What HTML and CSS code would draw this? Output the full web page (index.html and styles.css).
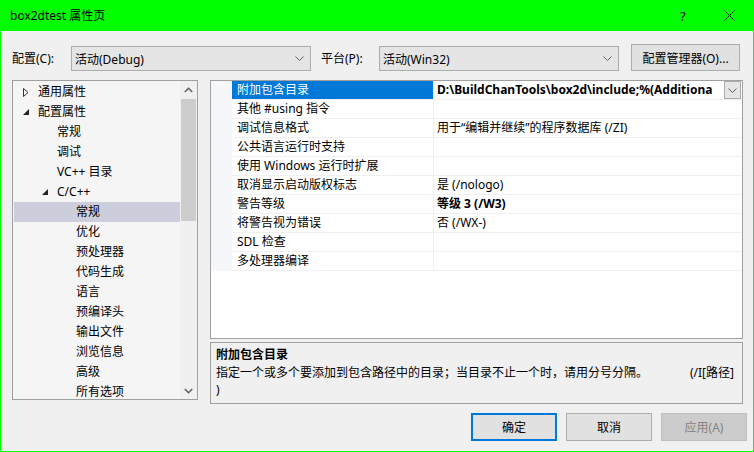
FILE: index.html
```html
<!DOCTYPE html>
<html lang="zh-CN">
<head>
  <meta charset="UTF-8" />
  <title>box2dtest 属性页</title>
  <link rel="stylesheet" href="styles.css">
</head>
<body>
  <div class="titlebar">
    <span class="title">box2dtest 属性页</span>
    <span class="help">?</span>
    <span class="close">
      <svg width="11" height="11" viewBox="0 0 11 11"><path d="M0.5 0.5 L10.5 10.5 M10.5 0.5 L0.5 10.5" stroke="#000" stroke-width="1" fill="none"/></svg>
    </span>
  </div>

  <div class="frame">
    <div class="config-row">
      <span class="cfg-label">配置(C):</span>
      <div class="combo">
        <span>活动(Debug)</span>
        <svg class="chev" width="9" height="5" viewBox="0 0 9 5"><path d="M0.5 0.5 L4.5 4.5 L8.5 0.5" stroke="#606060" fill="none"/></svg>
      </div>
      <span class="cfg-label platform">平台(P):</span>
      <div class="combo">
        <span>活动(Win32)</span>
        <svg class="chev" width="9" height="5" viewBox="0 0 9 5"><path d="M0.5 0.5 L4.5 4.5 L8.5 0.5" stroke="#606060" fill="none"/></svg>
      </div>
      <button class="btn mgr">配置管理器(O)...</button>
    </div>

    <div class="main">
      <div class="tree">
        <div class="tree-list">
          <div class="tree-row lvl0">
            <span class="toggle"><svg width="6" height="9" viewBox="0 0 6 9"><path d="M0.5 0.5 L5 4.5 L0.5 8.5 Z" stroke="#333" fill="none"/></svg></span>
            <span>通用属性</span>
          </div>
          <div class="tree-row lvl0">
            <span class="toggle"><svg width="6" height="6" viewBox="0 0 6 6"><path d="M6 0 L6 6 L0 6 Z" fill="#222"/></svg></span>
            <span>配置属性</span>
          </div>
          <div class="tree-row lvl1">常规</div>
          <div class="tree-row lvl1">调试</div>
          <div class="tree-row lvl1">VC++ 目录</div>
          <div class="tree-row lvl1t">
            <span class="toggle"><svg width="6" height="6" viewBox="0 0 6 6"><path d="M6 0 L6 6 L0 6 Z" fill="#222"/></svg></span>
            <span>C/C++</span>
          </div>
          <div class="tree-row lvl2 selected">常规</div>
          <div class="tree-row lvl2">优化</div>
          <div class="tree-row lvl2">预处理器</div>
          <div class="tree-row lvl2">代码生成</div>
          <div class="tree-row lvl2">语言</div>
          <div class="tree-row lvl2">预编译头</div>
          <div class="tree-row lvl2">输出文件</div>
          <div class="tree-row lvl2">浏览信息</div>
          <div class="tree-row lvl2">高级</div>
          <div class="tree-row lvl2">所有选项</div>
        </div>
        <div class="scrollbar">
          <div class="sb-arrow">
            <svg width="9" height="6" viewBox="0 0 9 6"><path d="M0.8 5 L4.5 1.3 L8.2 5" stroke="#606060" stroke-width="1.6" fill="none"/></svg>
          </div>
          <div class="sb-thumb"></div>
          <div class="sb-space"></div>
          <div class="sb-arrow">
            <svg width="9" height="6" viewBox="0 0 9 6"><path d="M0.8 1 L4.5 4.7 L8.2 1" stroke="#606060" stroke-width="1.6" fill="none"/></svg>
          </div>
        </div>
      </div>

      <div class="right">
        <div class="grid">
          <div class="prop selected">
            <div class="gutter"></div>
            <div class="pname">附加包含目录</div>
            <div class="pvalue bold">
              <span class="vtext">D:\BuildChanTools\box2d\include;%(Additiona</span>
              <span class="drop">
                <svg width="9" height="5" viewBox="0 0 9 5"><path d="M0.5 0.5 L4.5 4.5 L8.5 0.5" stroke="#606060" fill="none"/></svg>
              </span>
            </div>
          </div>
          <div class="prop"><div class="gutter"></div><div class="pname">其他 #using 指令</div><div class="pvalue"></div></div>
          <div class="prop"><div class="gutter"></div><div class="pname">调试信息格式</div><div class="pvalue">用于“编辑并继续”的程序数据库 (/ZI)</div></div>
          <div class="prop"><div class="gutter"></div><div class="pname">公共语言运行时支持</div><div class="pvalue"></div></div>
          <div class="prop"><div class="gutter"></div><div class="pname">使用 Windows 运行时扩展</div><div class="pvalue"></div></div>
          <div class="prop"><div class="gutter"></div><div class="pname">取消显示启动版权标志</div><div class="pvalue">是 (/nologo)</div></div>
          <div class="prop"><div class="gutter"></div><div class="pname">警告等级</div><div class="pvalue bold">等级 3 (/W3)</div></div>
          <div class="prop"><div class="gutter"></div><div class="pname">将警告视为错误</div><div class="pvalue">否 (/WX-)</div></div>
          <div class="prop"><div class="gutter"></div><div class="pname">SDL 检查</div><div class="pvalue"></div></div>
          <div class="prop"><div class="gutter"></div><div class="pname">多处理器编译</div><div class="pvalue"></div></div>
        </div>

        <div class="desc">
          <div class="desc-title">附加包含目录</div>
          <div class="desc-line">
            <span>指定一个或多个要添加到包含路径中的目录；当目录不止一个时，请用分号分隔。</span>
            <span>(/I[路径]</span>
          </div>
          <div class="desc-line">)</div>
        </div>
      </div>
    </div>

    <div class="buttons">
      <button class="btn default">确定</button>
      <button class="btn">取消</button>
      <button class="btn disabled">应用(A)</button>
    </div>
  </div>
</body>
</html>
```

FILE: styles.css
```css
* {
  box-sizing: border-box;
}

body {
  margin: 0;
  width: 754px;
  height: 452px;
  overflow: hidden;
  background-color: #f0f0f0;
  font-family: 'Noto Sans', 'Noto Sans CJK SC', sans-serif;
  font-size: 12px;
  color: #000;
}

/* title bar */
.titlebar {
  height: 31px;
  background-color: #00ff00;
  display: flex;
  align-items: center;
  padding-left: 10px;
}

.title {
  flex: 1;
  line-height: 16px;
}

.help {
  width: 14px;
  font-size: 13px;
  margin-right: 30px;
}

.close {
  display: flex;
  margin-right: 19px;
}

.frame {
  height: 421px;
  border: 1px solid #00ff00;
  border-top: none;
}

/* configuration row */
.config-row {
  display: flex;
  align-items: flex-start;
  padding: 13px 0 0 11px;
  height: 49px;
}

.cfg-label {
  width: 59px;
  line-height: 25px;
  margin-top: 2px;
}

.cfg-label.platform {
  width: 58px;
  margin-left: 10px;
}

.combo {
  width: 240px;
  height: 25px;
  margin-top: 2px;
  background-color: #e5e5e5;
  border: 1px solid #acacac;
  display: flex;
  align-items: center;
  justify-content: space-between;
  padding: 0 6px 0 3px;
}

.btn {
  font-family: inherit;
  font-size: 12px;
  color: #000;
  background-color: #e1e1e1;
  border: 1px solid #adadad;
  padding: 0;
  height: 28px;
  width: 86px;
}

.btn.mgr {
  width: 109px;
  height: 27px;
  margin-left: 12px;
}

.btn.default {
  border: 2px solid #0078d7;
}

.btn.disabled {
  background-color: #cccccc;
  border-color: #bfbfbf;
  color: #838383;
}

/* main area */
.main {
  display: flex;
  gap: 12px;
  padding-left: 11px;
}

.tree {
  width: 186px;
  height: 320px;
  border: 1px solid #a0a0a0;
  background-color: #f5f5f5;
  display: flex;
}

.tree-list {
  width: 167px;
  padding: 1px 0 0 1px;
}

.tree-row {
  height: 20px;
  line-height: 20px;
  display: flex;
  align-items: center;
  white-space: nowrap;
}

.tree-row .toggle {
  width: 15px;
  display: flex;
}

.tree-row.lvl0 {
  padding-left: 9px;
}

.tree-row.lvl1 {
  padding-left: 43px;
}

.tree-row.lvl1t {
  padding-left: 28px;
}

.tree-row.lvl2 {
  padding-left: 62px;
}

.tree-row.selected {
  background-color: #cccedb;
}

.scrollbar {
  width: 17px;
  background-color: #f0f0f0;
  display: flex;
  flex-direction: column;
  align-items: center;
}

.sb-arrow {
  height: 17px;
  width: 17px;
  display: flex;
  align-items: center;
  justify-content: center;
}

.sb-thumb {
  width: 15px;
  height: 122px;
  margin-top: 1px;
  background-color: #cdcdcd;
}

.sb-space {
  flex: 1;
}

.right {
  width: 533px;
}

/* property grid */
.grid {
  height: 259px;
  border: 1px solid #a0a0a0;
  background-color: #fff;
}

.prop {
  display: flex;
  height: 19px;
}

.gutter {
  width: 21px;
  background-color: #f5f7fb;
}

.pname {
  width: 202px;
  padding-left: 5px;
  line-height: 18px;
  border-bottom: 1px solid #f0f0f0;
  border-right: 1px solid #f0f0f0;
  white-space: nowrap;
}

.pvalue {
  flex: 1;
  padding-left: 3px;
  line-height: 18px;
  border-bottom: 1px solid #f0f0f0;
  white-space: nowrap;
  display: flex;
  justify-content: space-between;
  min-width: 0;
}

.bold {
  font-weight: bold;
}

.prop.selected .pname {
  background-color: #0078d7;
  color: #fff;
}

.drop {
  width: 17px;
  height: 18px;
  margin-right: 1px;
  background-color: #e5e5e5;
  border: 1px solid #acacac;
  display: flex;
  align-items: center;
  justify-content: center;
}

/* description */
.desc {
  height: 62px;
  margin-top: 3px;
  border: 1px solid #a0a0a0;
  padding: 2px 8px 0 5px;
}

.desc-title {
  font-weight: bold;
  line-height: 19px;
}

.desc-line {
  line-height: 17px;
  display: flex;
  justify-content: space-between;
}

/* bottom buttons */
.buttons {
  display: flex;
  justify-content: flex-end;
  gap: 9px;
  margin-top: 9px;
  padding-right: 6px;
}
```
